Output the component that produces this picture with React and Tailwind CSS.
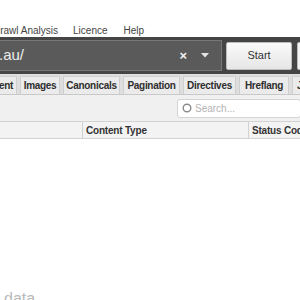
import React from 'react';

const tabs = [
  { label: 'ent', cls: 'w-[18px] justify-end pr-[3px] -ml-[1px]' },
  { label: 'Images', cls: 'w-[40px] justify-center' },
  { label: 'Canonicals', cls: 'w-[57px] justify-center' },
  { label: 'Pagination', cls: 'w-[57px] justify-center' },
  { label: 'Directives', cls: 'w-[53px] justify-center' },
  { label: 'Hreflang', cls: 'w-[50px] justify-center' },
  { label: 'Ja', cls: 'w-[30px] justify-start pl-[4px]' },
];

const App = () => {
  return (
    <div className="w-[300px] h-[300px] overflow-hidden bg-white flex flex-col font-['Liberation_Sans',Arial,sans-serif]">
      {/* menu bar */}
      <div className="h-[37px] flex items-start pt-[25px] text-[10px] leading-[12px] text-[#444] bg-white">
        <span className="-ml-[7px] whitespace-nowrap">Crawl Analysis</span>
        <span className="ml-[15px]">Licence</span>
        <span className="ml-[16px]">Help</span>
      </div>
      <div className="h-[1px] bg-[#b9b9b9]" />

      {/* url bar */}
      <div className="h-[37px] bg-[#454545] flex items-center gap-[4px] pl-0 shrink-0">
        <div className="w-[223px] h-[31px] -ml-[1px] shrink-0 bg-[#5a5a5a] border border-[#777] flex items-center pr-[10px]">
          <span className="text-[15px] text-[#ececec] -ml-[1px] flex-1">.au/</span>
          <span className="text-[#f2f2f2] text-[13px] font-bold leading-none mr-[14px]">×</span>
          <svg width="8" height="5" viewBox="0 0 8 5" className="mr-[2px]">
            <path d="M0 0 L8 0 L4 4.5 Z" fill="#e6e6e6" />
          </svg>
        </div>
        <button className="w-[66px] h-[28px] shrink-0 bg-gradient-to-b from-[#fafafa] to-[#e6e6e6] border border-[#bcbcbc] rounded-[2px] text-[11px] text-[#333]">
          Start
        </button>
        <div className="w-[10px] h-[28px] ml-[1px] shrink-0 bg-[#f3f3f3] border border-[#bcbcbc] rounded-[2px]" />
      </div>

      {/* tabs */}
      <div className="h-[21px] bg-[#dedede] flex items-stretch gap-[3px] pt-[2px] border-b border-[#c9c9c9] shrink-0">
        {tabs.map((t) => (
          <div
            key={t.label}
            className={`${t.cls} shrink-0 flex items-center bg-[#ebebeb] border border-b-0 border-[#cfcfcf] text-[10px] text-[#2e2e2e] font-semibold tracking-[-0.3px]`}
          >
            {t.label}
          </div>
        ))}
      </div>

      {/* toolbar */}
      <div className="h-[26px] bg-[#f0f0f0] flex items-center justify-end shrink-0">
        <div className="w-[124px] h-[19px] -mr-[1px] bg-white border border-[#d4d4d4] rounded-[3px] flex items-center pl-[4px] gap-[3px]">
          <svg width="10" height="10" viewBox="0 0 10 10">
            <circle cx="5" cy="5" r="3.8" fill="none" stroke="#8a8a8a" strokeWidth="1.4" />
          </svg>
          <span className="text-[10px] text-[#b3b3b3]">Search...</span>
        </div>
      </div>

      {/* table header */}
      <div className="h-[18px] bg-[#f3f3f3] border-t border-b border-[#d2d2d2] flex text-[10px] text-[#333] font-semibold tracking-[-0.2px] shrink-0">
        <div className="w-[83px] border-r border-[#d2d2d2]" />
        <div className="w-[166px] border-r border-[#d2d2d2] flex items-center pl-[3px]">Content Type</div>
        <div className="flex-1 flex items-center pl-[3px] whitespace-nowrap overflow-hidden">Status Code</div>
      </div>

      {/* body */}
      <div className="flex-1 bg-white pt-[148px] pl-[4px]">
        <span className="text-[16px] leading-[18px] text-[#b8b8b8]">data</span>
      </div>
    </div>
  );
};

export default App;
